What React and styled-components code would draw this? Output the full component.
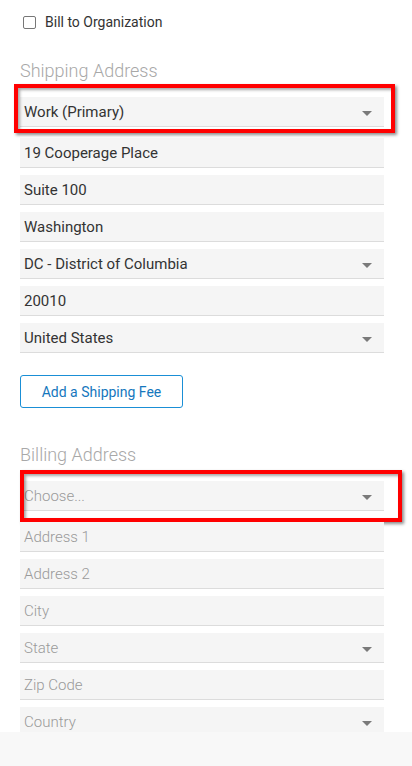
import styled, { createGlobalStyle } from "styled-components"

const GlobalStyle = createGlobalStyle`
  html, body {
    margin: 0;
    padding: 0;
    background: #fff;
    font-family: Roboto, "Liberation Sans", sans-serif;
    color: #333;
  }
`

const Page = styled.div`
  padding: 13px 28px 60px 20px;
  display: flex;
  flex-direction: column;
`

const CheckRow = styled.label`
  display: flex;
  align-items: center;
  gap: 9px;
  height: 18px;
  padding-left: 3px;
  font-size: 14px;
  color: #333;
`

const Box = styled.span`
  width: 13px;
  height: 13px;
  border: 1.5px solid #777;
  border-radius: 2px;
  box-sizing: border-box;
`

const Heading = styled.h3`
  margin: ${p => p.$top}px 0 14px;
  height: 24px;
  line-height: 24px;
  font-size: 18px;
  font-weight: 300;
  color: #a8a8a8;
`

const FieldList = styled.div`
  display: flex;
  flex-direction: column;
  gap: 7px;
`

const Field = styled.div`
  position: relative;
  height: 29px;
  background: #f5f5f5;
  border-bottom: 1px solid #dcdcdc;
  display: flex;
  align-items: center;
  justify-content: space-between;
  padding: 0 12px 0 4px;
  font-size: 15px;
  font-weight: ${p => (p.$empty ? 300 : 400)};
  color: ${p => (p.$empty ? "#9a9a9a" : "#333")};
  margin-bottom: ${p => (p.$lead ? "4px" : "0")};
`

const Caret = styled.span`
  width: 0;
  height: 0;
  border-left: 5px solid transparent;
  border-right: 5px solid transparent;
  border-top: 5px solid #7a7a7a;
  margin-top: 4px;
`

const Highlight = styled.span`
  position: absolute;
  top: ${p => p.$t}px;
  left: ${p => p.$l}px;
  right: ${p => p.$r}px;
  bottom: ${p => p.$b}px;
  border: 4px solid #ff0000;
  box-shadow: 2px 2px 3px rgba(0, 0, 0, 0.45), inset 2px 2px 3px rgba(0, 0, 0, 0.35);
  pointer-events: none;
`

const FeeButton = styled.button`
  align-self: flex-start;
  margin-top: 22px;
  width: 163px;
  height: 33px;
  background: #fff;
  border: 1px solid #1a8fd6;
  border-radius: 3px;
  color: #1577bd;
  font-family: Roboto, "Liberation Sans", sans-serif;
  font-size: 14px;
`

const Footer = styled.div`
  position: fixed;
  left: 0;
  right: 0;
  bottom: 0;
  height: 34px;
  background: #f8f8f8;
`

const shipping = [
  { text: "19 Cooperage Place" },
  { text: "Suite 100" },
  { text: "Washington" },
  { text: "DC - District of Columbia", select: true },
  { text: "20010" },
  { text: "United States", select: true },
]

const billing = [
  { text: "Address 1" },
  { text: "Address 2" },
  { text: "City" },
  { text: "State", select: true },
  { text: "Zip Code" },
  { text: "Country", select: true },
]

const App = () => {
  return (
    <>
      <GlobalStyle />
      <Page>
        <CheckRow>
          <Box />
          Bill to Organization
        </CheckRow>

        <Heading $top={28}>Shipping Address</Heading>
        <FieldList>
          <Field $lead>
            Work (Primary)
            <Caret />
            <Highlight $t={-13} $l={-6} $r={-11} $b={-7} />
          </Field>
          {shipping.map(f => (
            <Field key={f.text}>
              {f.text}
              {f.select && <Caret />}
            </Field>
          ))}
        </FieldList>

        <FeeButton>Add a Shipping Fee</FeeButton>

        <Heading $top={35}>Billing Address</Heading>
        <FieldList>
          <Field $empty $lead>
            Choose...
            <Caret />
            <Highlight $t={-11} $l={0} $r={-18} $b={-12} />
          </Field>
          {billing.map(f => (
            <Field key={f.text} $empty>
              {f.text}
              {f.select && <Caret />}
            </Field>
          ))}
        </FieldList>
      </Page>
      <Footer />
    </>
  )
}

export default App
